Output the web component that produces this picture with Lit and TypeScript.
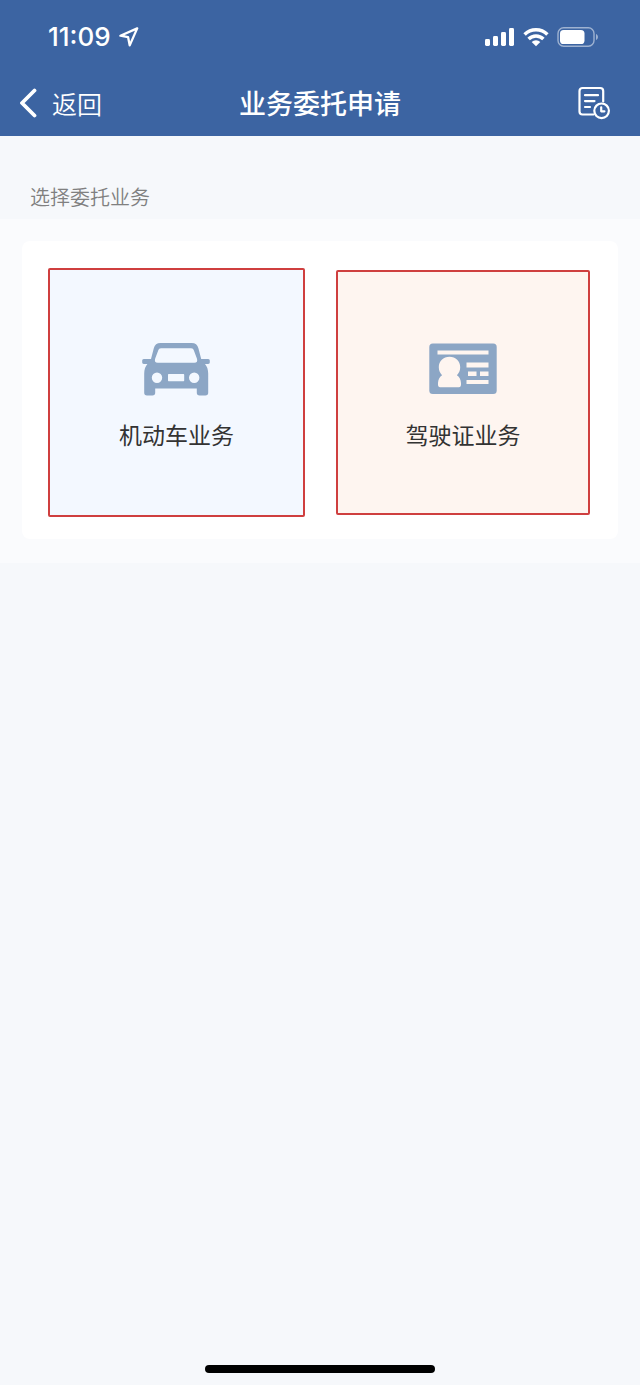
import { LitElement, html, css, svg } from "lit";
import { customElement } from "lit/decorators.js";

const locationIcon = svg`<svg class="icon" width="20" height="20" viewBox="0 0 20 20" aria-hidden="true">
  <path d="M18.2 1.4 1.4 8.7l7.7 1.5 1.6 8.2z" fill="none" stroke="currentColor" stroke-width="2.3" stroke-linejoin="round"/>
</svg>`;

const signalIcon = svg`<svg class="icon" width="30" height="20" viewBox="0 0 30 20" fill="currentColor" aria-hidden="true">
  <rect x="0" y="12" width="5" height="7" rx="1.4"/>
  <rect x="8" y="9" width="5" height="10" rx="1.4"/>
  <rect x="16" y="5" width="5" height="14" rx="1.4"/>
  <rect x="24" y="1" width="5" height="18" rx="1.4"/>
</svg>`;

const wifiIcon = svg`<svg class="icon" width="26" height="20" viewBox="0 0 26 20" aria-hidden="true">
  <g fill="none" stroke="currentColor" stroke-width="3.5">
    <path d="M1.6 7.4a16.3 16.3 0 0 1 22.8 0"/>
    <path d="M5.6 12.1a10.6 10.6 0 0 1 14.8 0"/>
  </g>
  <path d="M13 19.2 8.700 15a6 6 0 0 1 8.600 0z" fill="currentColor"/>
</svg>`;

const batteryIcon = svg`<svg class="icon" width="42" height="20" viewBox="0 0 42 20" aria-hidden="true">
  <rect x="1" y=".8" width="36" height="18.4" rx="5.6" fill="none" stroke="currentColor" stroke-width="1.4" opacity=".5"/>
  <rect x="3" y="3" width="24.5" height="14" rx="3.6" fill="currentColor"/>
  <path d="M39 7c2.6 1.200 2.600 4.800 0 6z" fill="currentColor" opacity=".5"/>
</svg>`;

const backIcon = svg`<svg class="icon" width="18" height="30" viewBox="0 0 18 30" aria-hidden="true">
  <path d="M14.500 2.500 2 15l12.500 12.500" fill="none" stroke="currentColor" stroke-width="3.800" stroke-linecap="round" stroke-linejoin="round"/>
</svg>`;

const recordsIcon = svg`<svg class="icon" width="32" height="34" viewBox="0 0 32 34" fill="none" stroke="currentColor" stroke-width="2.200" stroke-linecap="round" stroke-linejoin="round" aria-hidden="true">
  <path d="M25.200 15.500V5a3 3 0 0 0-3-3H4.500a3 3 0 0 0-3 3v20.500a3 3 0 0 0 3 3h11"/>
  <path d="M7 9.200h13M7 15.100h9.500M7 21h5"/>
  <circle cx="23.600" cy="24.800" r="7.300"/>
  <path d="M23.200 21.300v4h3.200"/>
</svg>`;

const carIcon = svg`<svg class="icon" width="68" height="54" viewBox="0 0 68 54" aria-hidden="true">
  <path fill="currentColor" fill-rule="evenodd" d="M18.500 1h31.200c3.600 0 5.800 1.800 6.700 5.200L59.200 17h7c1.100 0 1.600.7 1.600 1.800v1.500c0 1-.6 1.700-1.600 1.700H63c2 2.300 3.200 5.500 3.200 9.500v19.200c0 1.800-1 2.800-2.800 2.800h-5.800c-1.800 0-2.800-1-2.800-2.800V46.500H13.200v4.200c0 1.800-1 2.800-2.800 2.800H5c-1.800 0-2.800-1-2.800-2.800V31.500c0-4 1.200-7.200 3.200-9.500H1.800C.8 22 .2 21.300.2 20.300v-1.500C.2 17.700.7 17 1.800 17H9l2.800-10.800C12.700 2.800 14.900 1 18.500 1zM19 6.200c-1.500 0-2.300.7-2.700 2.100l-3.100 8.200c-.9 2.800 0 4.300 2.500 4.300h36.700c2.500 0 3.400-1.500 2.500-4.300l-3.100-8.200c-.4-1.400-1.200-2.100-2.700-2.100zM15 30.500a5.200 5.200 0 1 0 0 10.400 5.200 5.200 0 0 0 0-10.400zm37.200 0a5.200 5.200 0 1 0 0 10.400 5.200 5.200 0 0 0 0-10.400zM27 32c-.7 0-1 .4-1 1v5.200c0 .7.300 1 1 1h14.200c.7 0 1-.3 1-1V33c0-.6-.3-1-1-1z"/>
</svg>`;

const licenseIcon = svg`<svg class="icon" width="68" height="54" viewBox="0 0 68 54" aria-hidden="true">
  <rect x=".3" y="1.500" width="67.400" height="50.500" rx="3.500" fill="currentColor"/>
  <g class="cutout">
    <rect x="8.500" y="8.500" width="51" height="4"/>
    <path d="M20.500 14.800c6.200 0 10.700 4.500 10.700 10.500 0 3.500-1.300 5.800-3.300 8 2.300 1.500 3.900 4 4.100 7.700.2 3-.4 4.200-2.200 4.200H11.200c-1.800 0-2.400-1.200-2.200-4.200.2-3.700 1.800-6.200 4.100-7.700-2-2.200-3.300-4.500-3.300-8 0-6 4.500-10.500 10.700-10.500z"/>
    <rect x="37.500" y="20.500" width="22" height="5"/>
    <rect x="39" y="29.500" width="8.500" height="4.500"/>
    <rect x="51" y="29.500" width="8.500" height="4.500"/>
    <rect x="37.500" y="38" width="22" height="4"/>
  </g>
</svg>`;

@customElement("app-root")
export class AppRoot extends LitElement {
  static styles = css`
    :host {
      display: flex;
      flex-direction: column;
      min-height: 100vh;
      background: #f6f8fb;
      color: #333;
      font-family: Inter, "Noto Sans CJK SC", sans-serif;
    }
    .icon {
      display: block;
      flex: none;
    }
    button {
      font: inherit;
      color: inherit;
      background: none;
      border: 0;
      margin: 0;
      padding: 0;
      cursor: pointer;
    }
    .header {
      background: #3c64a2;
      color: #fff;
    }
    .status {
      display: flex;
      justify-content: space-between;
      align-items: center;
      height: 73px;
      padding: 0 41px 0 48px;
    }
    .clock,
    .indicators {
      display: flex;
      align-items: center;
      gap: 8px;
    }
    .clock {
      font-size: 26px;
      font-weight: 500;
    }
    .nav {
      display: grid;
      grid-template-columns: 1fr auto 1fr;
      align-items: center;
      height: 63px;
      padding: 0 30px 4px 20px;
      box-sizing: border-box;
    }
    .back {
      justify-self: start;
      display: flex;
      align-items: center;
      gap: 14px;
      font-size: 25px;
      font-weight: 350;
    }
    .title {
      margin: 0;
      padding-left: 10px;
      font-size: 27px;
      font-weight: 500;
    }
    .records {
      justify-self: end;
    }
    .subtitle {
      margin: 0;
      padding: 47px 30px 6px;
      font-size: 20px;
      line-height: 30px;
      font-weight: 350;
      color: #808080;
    }
    .panel {
      background: #fafbfd;
      padding: 22px 22px 24px;
    }
    .card {
      display: flex;
      align-items: center;
      gap: 31px;
      padding: 27px 28px 22px 26px;
      border-radius: 8px;
      background: #fff;
    }
    .tile {
      box-sizing: border-box;
      display: flex;
      flex-direction: column;
      align-items: center;
      justify-content: center;
      gap: 22px;
      min-width: 0;
      padding-top: 10px;
      border: 2px solid #cf3f3f;
      border-radius: 2px;
      font-size: 23px;
      line-height: 36px;
    }
    .tile .icon {
      color: #8ca6c5;
    }
    .vehicle {
      flex: 257;
      min-height: 249px;
      background: #f3f8ff;
    }
    .license {
      flex: 254;
      min-height: 245px;
      background: #fef5f0;
    }
    .cutout {
      fill: #fef5f0;
    }
    .home {
      width: 36%;
      height: 8px;
      margin: auto auto 12px;
      border-radius: 4px;
      background: #000;
    }
  `;

  render() {
    return html`
      <header class="header">
        <div class="status">
          <div class="clock"><span>11:09</span>${locationIcon}</div>
          <div class="indicators">${signalIcon}${wifiIcon}${batteryIcon}</div>
        </div>
        <nav class="nav">
          <button class="back" type="button">${backIcon}<span>返回</span></button>
          <h1 class="title">业务委托申请</h1>
          <button class="records" type="button" aria-label="申请记录">${recordsIcon}</button>
        </nav>
      </header>
      <main>
        <h2 class="subtitle">选择委托业务</h2>
        <div class="panel">
          <div class="card">
            <button class="tile vehicle" type="button">${carIcon}<span>机动车业务</span></button>
            <button class="tile license" type="button">${licenseIcon}<span>驾驶证业务</span></button>
          </div>
        </div>
      </main>
      <div class="home"></div>
    `;
  }
}
